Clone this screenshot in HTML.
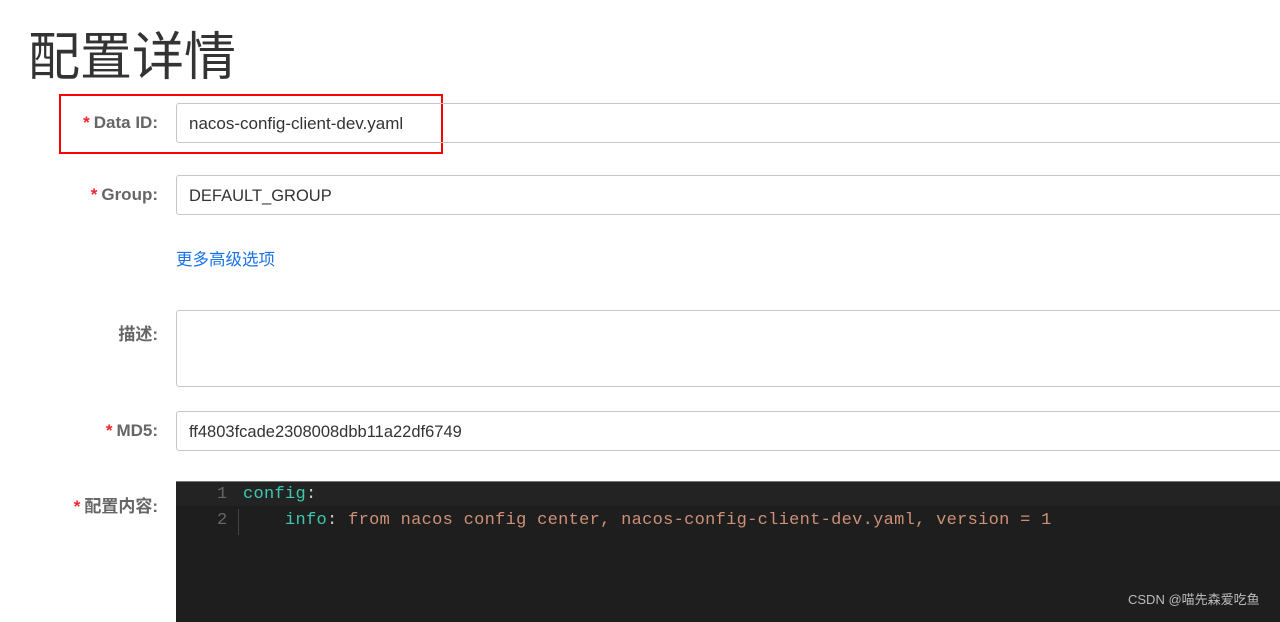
<!DOCTYPE html>
<html><head><meta charset="utf-8"><style>
body{margin:0;width:1280px;height:611px;overflow:hidden;background:#fff;font-family:"Liberation Sans","Noto Sans CJK SC",sans-serif;position:relative}
.a{position:absolute}
h1{position:absolute;left:28px;top:24px;margin:0;font-size:52px;font-weight:normal;color:#333;line-height:68px}
.lbl{position:absolute;right:1122px;font-size:17px;font-weight:bold;color:#666;white-space:nowrap}
.lbl i{color:#f5222d;font-style:normal;margin-right:4px}
.in{position:absolute;left:176px;width:1120px;border:1px solid #c4c6cf;border-radius:3px;box-sizing:border-box;font-size:16.5px;color:#333;padding-left:12px}
.ed{position:absolute;left:176px;top:481px;width:1110px;height:140px;background:#1e1e1e;border-top:1px solid #777;font-family:"Liberation Mono","DejaVu Sans Mono",monospace;font-size:17px;letter-spacing:0.3px}
.ln{position:absolute;left:41px;color:#666}
.k{color:#3dc9b0}.s{color:#ce9178}.p{color:#ccc}
</style></head><body>
<h1>配置详情</h1>
<div class="a" style="left:59px;top:94px;width:380px;height:56px;border:2px solid #f00"></div>
<div class="lbl" style="top:113px"><i>*</i>Data ID:</div>
<div class="in" style="top:103px;height:40px;line-height:40px;font-size:17px">nacos-config-client-dev.yaml</div>
<div class="lbl" style="top:185px"><i>*</i>Group:</div>
<div class="in" style="top:175px;height:40px;line-height:40px">DEFAULT_GROUP</div>
<div class="a" style="left:176px;top:246px;font-size:16.5px;color:#1a73e8">更多高级选项</div>
<div class="lbl" style="top:320px">描述:</div>
<div class="in" style="top:310px;height:77px"></div>
<div class="lbl" style="top:421px"><i>*</i>MD5:</div>
<div class="in" style="top:411px;height:40px;line-height:40px">ff4803fcade2308008dbb11a22df6749</div>
<div class="lbl" style="top:492px"><i>*</i>配置内容:</div>
<div class="ed">
<div class="a" style="left:0;top:0;width:1110px;height:24px;background:#232323"></div>
<div class="a" style="left:62px;top:27px;width:1px;height:26px;background:#444"></div>
<div class="ln" style="top:3px">1</div><div class="ln" style="top:29px">2</div>
<div class="a" style="left:67px;top:3px;white-space:pre"><span class="k">config</span><span class="p">:</span></div>
<div class="a" style="left:67px;top:29px;white-space:pre">    <span class="k">info</span><span class="p">:</span> <span class="s">from nacos config center, nacos-config-client-dev.yaml, version = 1</span></div>
</div>
<div class="a" style="left:1128px;top:589px;font-size:13px;color:#bbb">CSDN @喵先森爱吃鱼</div>
</body></html>
